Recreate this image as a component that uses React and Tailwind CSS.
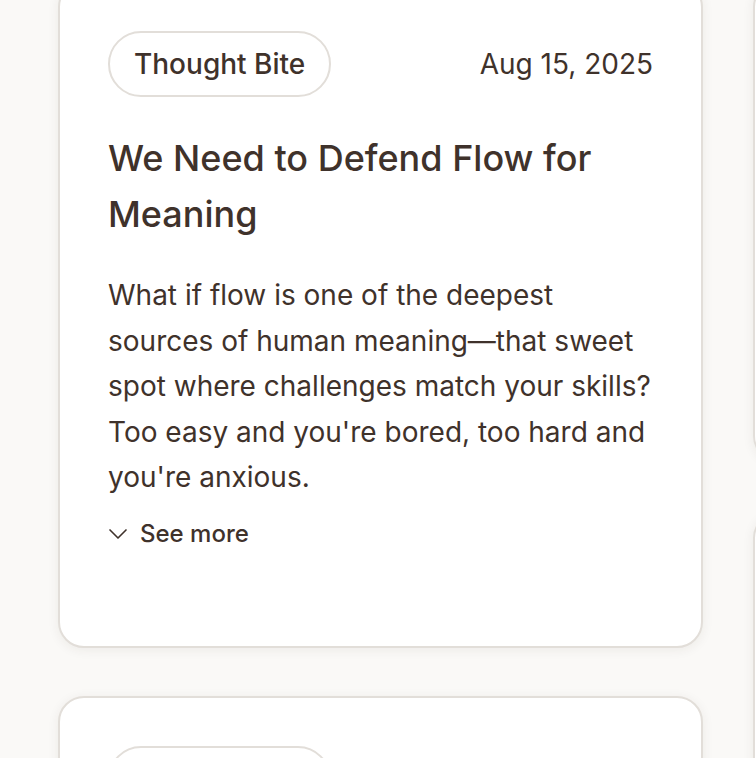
import React from 'react';
import { ChevronDown } from 'lucide-react';

const posts = [
  {
    id: 1,
    tag: 'Thought Bite',
    fecha: 'Aug 15, 2025',
    titulo: 'We Need to Defend Flow for Meaning',
    texto:
      "What if flow is one of the deepest sources of human meaning\u2014that sweet spot where challenges match your skills? Too easy and you're bored, too hard and you're anxious.",
  },
  {
    id: 2,
    tag: 'Thought Bite',
    fecha: 'Aug 12, 2025',
    titulo: 'Notes on Attention',
    texto: 'Attention is the scarce resource that shapes everything else we do.',
  },
];

const Card = ({ post, className = '' }) => (
  <div
    className={`bg-white border-2 border-[#e2ded9] rounded-[26px] shadow-[0_2px_12px_rgba(60,45,35,0.07)] px-[48px] pt-[48px] pb-[94px] ${className}`}
  >
    <div className="flex items-center justify-between">
      <span className="h-[66px] px-[24px] flex items-center rounded-full border-2 border-[#e2ded9] text-[28px] font-medium text-[#3f322b]">
        {post.tag}
      </span>
      <span className="text-[28px] text-[#3f322b]">{post.fecha}</span>
    </div>
    <h2 className="mt-[33px] text-[36px] leading-[56px] font-medium text-[#3f322b]">{post.titulo}</h2>
    <p className="mt-[31px] text-[28px] leading-[45.5px] text-[#3f322b]">{post.texto}</p>
    <button className="mt-[15px] flex items-center gap-[6px] text-[24px] font-medium text-[#3f322b] -ml-[6px]">
      <ChevronDown size={32} strokeWidth={1.25} />
      See more
    </button>
  </div>
);

export default function App() {
  return (
    <div className="h-[758px] overflow-hidden bg-[#faf9f7] font-['Inter',sans-serif]">
      <div className="flex gap-[50px] pl-[58px] -mt-[19px]">
        <div className="w-[645px] shrink-0 flex flex-col gap-[48px]">
          <Card post={posts[0]} />
          <Card post={posts[1]} />
        </div>
        <div className="w-[645px] shrink-0 flex flex-col gap-[50px]">
          <div className="h-[481px] bg-white border-2 border-[#e2ded9] rounded-[26px] shadow-[0_2px_12px_rgba(60,45,35,0.07)]" />
          <div className="h-[400px] bg-white border-2 border-[#e2ded9] rounded-[26px] shadow-[0_2px_12px_rgba(60,45,35,0.07)]" />
        </div>
      </div>
    </div>
  );
}
